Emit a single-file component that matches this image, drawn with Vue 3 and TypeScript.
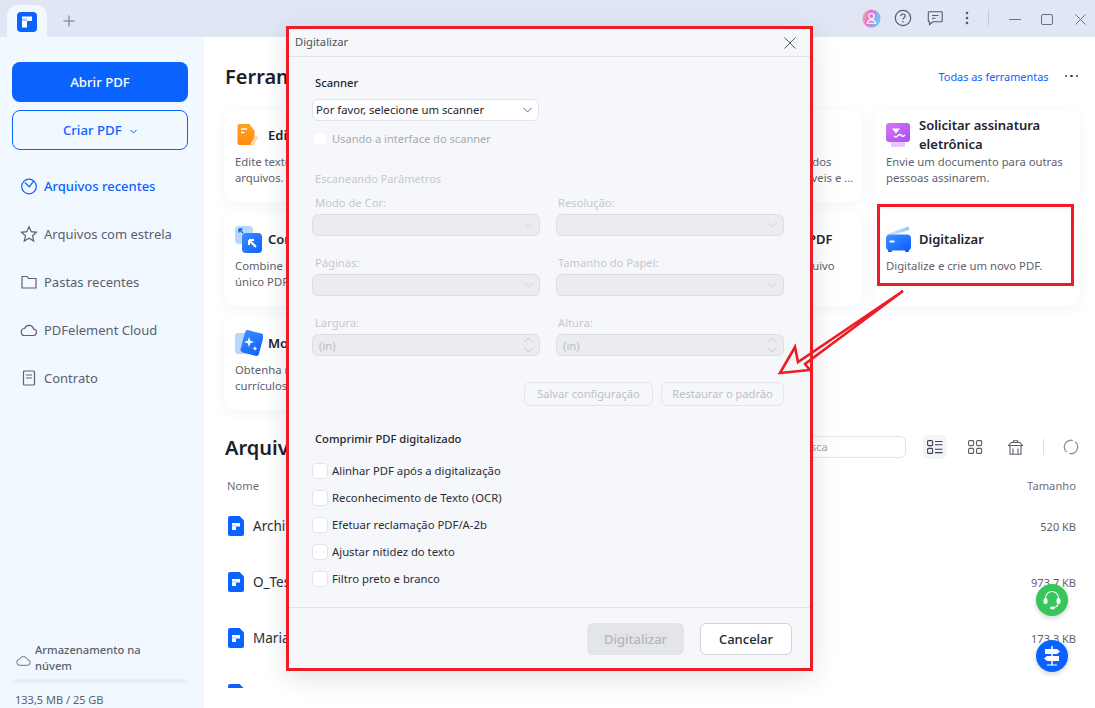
<script setup lang="ts">
interface Tool { title: string; lines: string[]; icon: string }
const tools: Tool[] = [
  { title: 'Editar PDF', lines: ['Edite textos e imagens nos', 'arquivos.'], icon: 'edit' },
  { title: 'Converter PDF', lines: ['Converta PDFs em outros', 'formatos de arquivo.'], icon: 'merge' },
  { title: 'Ler PDF', lines: ['Converta os PDFs digitalizados', 'em arquivos bem pesquisáveis e ...'], icon: 'merge' },
  { title: 'Solicitar assinatura eletrônica', lines: ['Envie um documento para outras', 'pessoas assinarem.'], icon: 'sign' },
  { title: 'Combinar PDF', lines: ['Combine vários arquivos em um', 'único PDF.'], icon: 'merge' },
  { title: 'Proteger PDF', lines: ['Adicione senha a um arquivo', 'PDF.'], icon: 'edit' },
  { title: 'Otimizar em um PDF', lines: ['Diminua o tamanho do arquivo'], icon: 'merge' },
  { title: 'Digitalizar', lines: ['Digitalize e crie um novo PDF.'], icon: 'scan' },
  { title: 'Modelos', lines: ['Obtenha modelos de', 'currículos e cartas.'], icon: 'tmpl' },
]
const nav = ['Arquivos recentes', 'Arquivos com estrela', 'Pastas recentes', 'PDFelement Cloud', 'Contrato']
const files = [
  { name: 'Architecture.pdf', size: '520 KB' },
  { name: 'O_Teste.pdf', size: '973,7 KB' },
  { name: 'Maria.pdf', size: '173,3 KB' },
  { name: 'Novo.pdf', size: '96 KB' },
]
const fields = [
  { label: 'Modo de Cor:', value: '', spin: false },
  { label: 'Resolução:', value: '', spin: false },
  { label: 'Páginas:', value: '', spin: false },
  { label: 'Tamanho do Papel:', value: '', spin: false },
  { label: 'Largura:', value: '(in)', spin: true },
  { label: 'Altura:', value: '(in)', spin: true },
]
const checks = ['Alinhar PDF após a digitalização', 'Reconhecimento de Texto (OCR)', 'Efetuar reclamação PDF/A-2b', 'Ajustar nitidez do texto', 'Filtro preto e branco']
</script>

<template>
  <div class="app">
    <header class="topbar">
      <div class="tab">
        <svg width="20" height="20" viewBox="0 0 20 20"><rect width="20" height="20" rx="4" fill="#0a62ff"/><path d="M5 4.500h10v4.500h-5v2H5z" fill="#fff"/><path d="M5 6.500h5v2.500H5z" fill="#a9cbff"/><rect x="5" y="11" width="5" height="4.500" fill="#fff"/></svg>
      </div>
      <svg class="plus" width="12" height="12" viewBox="0 0 12 12"><path d="M6 .5v11M.5 6h11" stroke="#6d7280" stroke-width="1" fill="none"/></svg>
      <div class="controls">
        <svg class="avatar" width="19" height="19" viewBox="0 0 20 20"><defs><linearGradient id="av" x1="0" y1="0" x2="1" y2="0.300"><stop offset="0" stop-color="#f4b38f"/><stop offset=".45" stop-color="#ee6fd0"/><stop offset="1" stop-color="#63c9f6"/></linearGradient></defs><circle cx="10" cy="10" r="9.500" fill="url(#av)"/><circle cx="10" cy="7.500" r="2.800" fill="none" stroke="#fff" stroke-width="1.200"/><path d="M5.500 15c.5-2.500 2-3.500 4.500-3.500s4 1 4.500 3.500z" fill="none" stroke="#fff" stroke-width="1.200"/></svg>
        <svg class="help" width="18" height="18" viewBox="0 0 18 18"><circle cx="9" cy="9" r="7.700" fill="none" stroke="#555b68" stroke-width="1.200"/><path d="M6.800 7.100c0-1.300 1-2.100 2.200-2.100s2.200.8 2.200 2c0 1.700-2.200 1.700-2.200 3.500" fill="none" stroke="#555b68" stroke-width="1.200"/><circle cx="9" cy="12.800" r=".8" fill="#555b68"/></svg>
        <svg class="chat" width="16" height="16" viewBox="0 0 16 16"><path d="M2 1.800h12.500a.7.7 0 0 1 .7.7v8.500a.7.7 0 0 1-.7.7H6l-3.500 2.800v-2.800H2a.7.7 0 0 1-.7-.7V2.500a.7.7 0 0 1 .7-.7z" fill="none" stroke="#555b68" stroke-width="1.100"/><path d="M5 5.500h6.500M5 8.300h3.500" stroke="#555b68" stroke-width="1.100" fill="none"/></svg>
        <svg class="kebab" width="4" height="14" viewBox="0 0 4 14"><circle cx="2" cy="2" r="1.300" fill="#555b68"/><circle cx="2" cy="7" r="1.300" fill="#555b68"/><circle cx="2" cy="12" r="1.300" fill="#555b68"/></svg>
        <span class="vsep"></span>
        <span class="min"></span>
        <span class="max"></span>
        <svg class="close" width="11" height="11" viewBox="0 0 11 11"><path d="M.5.500l10 10M10.500.500l-10 10" stroke="#6b707c" stroke-width="1" fill="none"/></svg>
      </div>
    </header>

    <div class="body">
      <aside class="sidebar">
        <button class="btn-open">Abrir PDF</button>
        <button class="btn-create">Criar PDF <svg class="chev" width="7" height="5" viewBox="0 0 7 5"><path d="M.5 1l3 3 3-3" fill="none" stroke="#0a62ff" stroke-width="1"/></svg></button>
        <nav class="nav">
          <div v-for="(n, i) in nav" :key="n" class="nav-item" :class="{ active: i === 0 }">
            <svg width="18" height="18" viewBox="0 0 18 18" fill="none" :stroke="i === 0 ? '#0a62ff' : '#5d626e'" stroke-width="1.200">
              <template v-if="i === 0"><circle cx="9" cy="9.500" r="7.300"/><path d="M4.800 5.500l4.500 4.300 4.400-6"/></template>
              <path v-else-if="i === 1" d="M9 1.800l2.200 4.900 5.300.6-4 3.500 1.200 5.200L9 13.300 4.300 16l1.200-5.200-4-3.500 5.300-.6z"/>
              <path v-else-if="i === 2" d="M2 3.500h5l1.500 2H16v9.500H2z"/>
              <path v-else-if="i === 3" d="M5 14.500a3.500 3.500 0 0 1-.4-7 4.600 4.600 0 0 1 8.900.6 3.200 3.200 0 0 1-.5 6.400z"/>
              <template v-else><rect x="3.500" y="2" width="11" height="14" rx="1"/><path d="M6 6h6M6 9h6"/></template>
            </svg>
            <span>{{ n }}</span>
          </div>
        </nav>
        <div class="storage">
          <div class="st-head">
            <svg width="15" height="11" viewBox="0 0 15 11"><path d="M4 10.300a3 3 0 0 1-.5-6 4.200 4.200 0 0 1 8 .4 2.800 2.800 0 0 1-.3 5.600z" fill="none" stroke="#6b707c" stroke-width="1"/></svg>
            <span>Armazenamento na núvem</span>
          </div>
          <div class="st-bar"></div>
          <div class="st-text">133,5 MB / 25 GB</div>
        </div>
      </aside>

      <main class="main">
        <div class="h-row">
          <h2>Ferramentas</h2>
          <a class="all">Todas as ferramentas</a>
          <span class="dots"><i></i><i></i><i></i></span>
        </div>
        <section class="tools">
          <article v-for="t in tools" :key="t.title" class="card">
            <div class="card-head">
              <svg v-if="t.icon === 'edit'" class="ic" width="26" height="26" viewBox="0 0 26 26">
                <defs><linearGradient id="og" x1="0" y1="0" x2="0" y2="1"><stop offset="0" stop-color="#ffa21f"/><stop offset="1" stop-color="#ff8a14"/></linearGradient></defs>
                <path d="M4.500 2h10l5 7v12a2 2 0 0 1-2 2H4.500a2 2 0 0 1-2-2V4a2 2 0 0 1 2-2z" fill="url(#og)"/>
                <path d="M6 7h6M6 10.500h3.500" stroke="#fff" stroke-width="1.500"/>
                <path d="M21 13.500l2.500 1.700-4.500 7.300-3.300 1.300.3-3.200z" fill="#ffd9ae"/>
              </svg>
              <svg v-else-if="t.icon === 'merge'" class="ic narrow" width="28" height="28" viewBox="0 0 28 28">
                <defs><linearGradient id="bg1" x1="0" y1="0" x2="1" y2="1"><stop offset="0" stop-color="#3d8dff"/><stop offset="1" stop-color="#0a62ff"/></linearGradient></defs>
                <rect x="0" y="1" width="18" height="18" rx="4" fill="#b7d8fb"/>
                <path d="M4 4l4 4M4 4v3.500M4 4h3.500" stroke="#0a62ff" stroke-width="1.500" fill="none"/>
                <rect x="7" y="8" width="20" height="20" rx="4" fill="url(#bg1)"/>
                <path d="M21 22l-6-6M14 15h5M14 15v5" stroke="#fff" stroke-width="2" fill="none"/>
              </svg>
              <svg v-else-if="t.icon === 'sign'" class="ic wide" width="24" height="25" viewBox="0 0 24 25">
                <defs><linearGradient id="pg" x1="0" y1="0" x2="1" y2="1"><stop offset="0" stop-color="#d479f7"/><stop offset="1" stop-color="#a94df0"/></linearGradient></defs>
                <rect x="5" y="19" width="14" height="5" rx="1" fill="#e7c6f9"/>
                <rect width="24" height="19" rx="3" fill="url(#pg)"/>
                <path d="M6 5.500h8l-4 5z" fill="#fff"/>
                <path d="M8 13c2 2 3 .5 4-.5s2.500-1.500 3.500 0 2 1 3.500-.5" stroke="#fff" stroke-width="1.400" fill="none"/>
              </svg>
              <svg v-else-if="t.icon === 'scan'" class="ic" width="25" height="26" viewBox="0 0 25 26">
                <defs><linearGradient id="sg" x1="0" y1="0" x2="1" y2="1"><stop offset="0" stop-color="#3f91ff"/><stop offset="1" stop-color="#0a5cff"/></linearGradient><linearGradient id="sl" x1="0" y1="1" x2="1" y2="0"><stop offset="0" stop-color="#e1eefd"/><stop offset="1" stop-color="#8fc0f8"/></linearGradient></defs>
                <path d="M1 8L22.500 .5l1.200 3.200L3 10.500z" fill="url(#sl)"/>
                <rect x="2" y="23" width="4" height="3" rx="1" fill="#0a5cff"/><rect x="19" y="23" width="4" height="3" rx="1" fill="#0a5cff"/>
                <path d="M4 8.500h17a4 4 0 0 1 4 4v8a4 4 0 0 1-4 4H4a4 4 0 0 1-4-4v-8a4 4 0 0 1 4-4z" fill="url(#sg)"/>
                <rect x="3.500" y="14.500" width="5" height="2" fill="#fff"/>
              </svg>
              <svg v-else class="ic narrow" width="28" height="28" viewBox="0 0 28 28">
                <defs><linearGradient id="tg" x1="0" y1="0" x2="1" y2="1"><stop offset="0" stop-color="#3d8dff"/><stop offset="1" stop-color="#0a62ff"/></linearGradient></defs>
                <rect x="0" y="4" width="18" height="21" rx="3" fill="#b7d8fb"/>
                <rect x="7.500" y="2.500" width="19" height="23" rx="3" transform="rotate(15 17 14)" fill="url(#tg)"/>
                <path d="M14 8l1.300 3.700L19 13l-3.700 1.300L14 18l-1.300-3.700L9 13l3.700-1.300z" fill="#fff"/>
                <path d="M20 17l.7 1.800 1.800.7-1.800.7-.7 1.800-.7-1.800-1.800-.7 1.800-.7z" fill="#fff"/>
              </svg>
              <h3>{{ t.title }}</h3>
            </div>
            <p v-for="(l, li) in t.lines" :key="li">{{ l }}</p>
          </article>
        </section>

        <div class="h-row second">
          <h2>Arquivos recentes</h2>
          <div class="search">Busca</div>
          <span class="view on"><svg width="16" height="14" viewBox="0 0 16 14" fill="none" stroke="#3d4250" stroke-width="1.100"><rect x=".6" y=".6" width="5" height="5" rx="1"/><rect x=".6" y="8.400" width="5" height="5" rx="1"/><path d="M8 1.500h7.500M8 4.800h7.500M8 9.300h7.500M8 12.600h7.500"/></svg></span>
          <span class="view"><svg width="15" height="14" viewBox="0 0 15 14" fill="none" stroke="#5d626e" stroke-width="1.100"><rect x=".6" y=".6" width="5" height="5" rx="1"/><rect x="8.600" y=".6" width="5" height="5" rx="1"/><rect x=".6" y="8.400" width="5" height="5" rx="1"/><rect x="8.600" y="8.400" width="5" height="5" rx="1"/></svg></span>
          <span class="view"><svg width="15" height="15" viewBox="0 0 15 15" fill="none" stroke="#5d626e" stroke-width="1.100"><path d="M2 5.500v8.800h11V5.500M.5 5.500h14L12 2.500H3zM5.500 2.500V.8h4v1.700M5 8.500v5.500M10 8.500v5.500"/></svg></span>
          <span class="vsep2"></span>
          <span class="view last"><svg width="16" height="16" viewBox="0 0 16 16" fill="none" stroke="#8b8f9a" stroke-width="1.300"><circle cx="8" cy="8" r="6.700" stroke-dasharray="18 3" transform="rotate(-50 8 8)"/></svg></span>
        </div>
        <div class="t-head"><span>Nome</span><span>Tamanho</span></div>
        <div class="list">
          <div v-for="f in files" :key="f.name" class="row">
            <svg width="16" height="20" viewBox="0 0 16 20"><path d="M2 0h9.500L16 4.500V18a2 2 0 0 1-2 2H2a2 2 0 0 1-2-2V2a2 2 0 0 1 2-2z" fill="#0a62ff"/><path d="M4 7h8v3.500H8V14H4z" fill="#fff"/><path d="M8 10.500H4V8.800h4z" fill="#bcd5ff"/></svg>
            <span class="fname">{{ f.name }}</span>
            <span class="fsize">{{ f.size }}</span>
          </div>
        </div>
      </main>
    </div>

    <button class="fab green"><svg width="20" height="21" viewBox="0 0 20 21" fill="none"><path d="M3.500 11V8a6.500 6.500 0 0 1 13 0v3" stroke="#fff" stroke-width="1.100"/><rect x="1.500" y="8" width="4" height="6" rx="2" fill="#fff"/><rect x="14.500" y="8" width="4" height="6" rx="2" fill="#fff"/><path d="M16 14c0 2-2 3-4 3.500" stroke="#fff" stroke-width="1.100"/><ellipse cx="10.500" cy="18" rx="2.500" ry="1.400" fill="#fff"/></svg></button>
    <button class="fab blue"><svg width="18" height="20" viewBox="0 0 18 20" fill="#fff"><rect x="8.300" y="0" width="1.500" height="19"/><rect x="4" y="18.500" width="10" height="1"/><path d="M2 3h12l3 2.500L14 8H2z"/><path d="M16 10H4l-3 2.500L4 15h12z"/></svg></button>

    <div class="target"></div>

    <section class="dialog">
      <div class="d-title">
        <span>Digitalizar</span>
        <svg width="12" height="12" viewBox="0 0 12 12"><path d="M.5.500l11 11M11.500.500l-11 11" stroke="#555b68" stroke-width="1" fill="none"/></svg>
      </div>
      <div class="d-body">
        <div class="d-h first">Scanner</div>
        <div class="select">
          <span>Por favor, selecione um scanner</span>
          <svg width="9" height="6" viewBox="0 0 9 6"><path d="M.5 1l4 4 4-4" fill="none" stroke="#6b707c" stroke-width="1"/></svg>
        </div>
        <div class="chk disabled top"><i></i><span>Usando a interface do scanner</span></div>
        <div class="d-h muted sect">Escaneando Parâmetros</div>
        <div class="grid">
          <div v-for="f in fields" :key="f.label" class="field">
            <label>{{ f.label }}</label>
            <div class="box">
              <span>{{ f.value }}</span>
              <svg v-if="!f.spin" width="9" height="6" viewBox="0 0 9 6"><path d="M.5 1l4 4 4-4" fill="none" stroke="#d0d2d8" stroke-width="1"/></svg>
              <svg v-else width="9" height="16" viewBox="0 0 9 16" fill="none" stroke="#c4c6cc" stroke-width="1"><path d="M.5 5l4-4 4 4M.5 11l4 4 4-4"/></svg>
            </div>
          </div>
        </div>
        <div class="cfg">
          <button class="g1">Salvar configuração</button>
          <button class="g2">Restaurar o padrão</button>
        </div>
        <div class="d-h comp">Comprimir PDF digitalizado</div>
        <div class="checks">
          <div v-for="c in checks" :key="c" class="chk"><i></i><span>{{ c }}</span></div>
        </div>
      </div>
      <footer class="d-foot">
        <button class="go">Digitalizar</button>
        <button class="cancel">Cancelar</button>
      </footer>
    </section>

    <svg class="arrow" width="140" height="100" viewBox="0 0 140 100">
      <path d="M128 7L23 78 20 63 5 89 35 86 30 80Z" fill="none" stroke="#ee1c25" stroke-width="2.600" stroke-linejoin="miter"/>
    </svg>
  </div>
</template>

<style>
html, body { margin: 0; background: #fff; }
</style>

<style scoped>
.app { position: relative; width: 1095px; height: 708px; overflow: hidden; display: flex; flex-direction: column; font-family: "Noto Sans", "Open Sans", sans-serif; font-size: 11.3px; color: #222; background: #fff; }
button { font-family: inherit; cursor: pointer; }
h2, h3, p { margin: 0; }

.topbar { height: 37px; flex: none; background: #e1e6f4; display: flex; align-items: flex-start; position: relative; }
.tab { width: 40px; height: 32px; margin: 5px 0 0 7px; background: #f3f8ff; border-radius: 10px 10px 0 0; display: flex; justify-content: center; padding-top: 7px; box-sizing: border-box; }
.plus { margin: 15px 0 0 16px; }
.controls { margin-left: auto; height: 36px; display: flex; align-items: center; }
.avatar { margin-right: 13px; }
.help { margin-right: 15px; }
.chat { margin-right: 22px; }
.kebab { margin-right: 19px; }
.vsep { width: 1px; height: 16px; background: #c6cad6; margin-right: 20px; }
.min { width: 12px; height: 1px; background: #6b707c; margin-right: 20px; margin-top: 2px; }
.max { width: 10px; height: 9px; border: 1px solid #6b707c; border-radius: 2px; margin-right: 22px; margin-top: 2px; }
.close { margin-right: 9px; margin-top: 2px; }

.body { flex: 1; display: flex; min-height: 0; }
.sidebar { width: 204px; flex: none; box-sizing: border-box; background: #f2f8ff; padding: 25px 16px 0 12px; display: flex; flex-direction: column; }
.btn-open { height: 40px; border: 0; border-radius: 8px; background: #0a62ff; color: #fff; font-size: 13.2px; font-weight: 500; }
.btn-create { height: 40px; margin-top: 8px; border: 1px solid #0a62ff; border-radius: 8px; background: transparent; color: #0a62ff; font-size: 13.2px; font-weight: 500; }
.chev { margin-left: 5px; vertical-align: 1px; }
.nav { margin-top: 12px; }
.nav-item { height: 48px; display: flex; align-items: center; gap: 6px; padding-left: 8px; font-size: 13px; color: #5b606c; }
.nav-item.active { color: #0a62ff; font-weight: 500; }
.storage { margin-top: auto; }
.st-head { display: flex; align-items: center; margin-left: 4px; font-size: 11.2px; line-height: 16px; color: #5b606c; font-weight: 500; }
.st-head svg { flex: none; margin: 5px 4px 0 0; }
.st-head span { width: 130px; }
.st-bar { height: 4px; margin: 5px 1px 0 1px; border-radius: 2px; background: #ebeef4; }
.st-text { margin: 9px 0 0 3px; line-height: 16px; font-size: 11px; color: #5b606c; }

.main { flex: 1; min-width: 0; padding: 0 15px 0 20px; }
.h-row { display: flex; align-items: center; height: 28px; margin-top: 25px; padding-left: 1px; }
.h-row h2 { font-size: 20px; font-weight: 600; color: #1b1f2a; white-space: nowrap; }
.all { margin-left: auto; color: #0a62ff; font-size: 10.9px; margin-right: 16px; }
.dots { display: flex; gap: 3px; margin-right: 2px; }
.dots i { width: 2.500px; height: 2.500px; background: #3a3f4c; border-radius: 50%; }
.tools { display: grid; grid-template-columns: repeat(4, 205px); grid-auto-rows: 92px; gap: 12px; margin-top: 20px; }
.card { background: #fff; border-radius: 10px; box-shadow: 0 2px 12px rgba(30, 60, 130, 0.06); padding: 10px 11px 0; overflow: hidden; }
.card-head { height: 30px; display: flex; align-items: center; margin-bottom: 4px; }
.ic { flex: none; margin-right: 7px; }
.ic.narrow { margin-right: 5px; }
.ic.wide { margin-right: 9px; }
.card:nth-child(4n) .ic:not(.wide) { margin-right: 8px; }
.card h3 { font-size: 13px; font-weight: 600; line-height: 19px; color: #1f2330; }
.card p { font-size: 11.3px; line-height: 16px; color: #5e6270; white-space: nowrap; }
.h-row.second { height: 24px; margin-top: 25px; }
.search { margin-left: auto; width: 140px; height: 22px; flex: none; box-sizing: border-box; border: 1px solid #e3e5ea; border-radius: 6px; line-height: 20px; padding-left: 30px; font-size: 11px; color: #a5a8b1; margin-right: 17px; }
.view { width: 24px; height: 24px; flex: none; border-radius: 6px; display: flex; align-items: center; justify-content: center; margin-right: 16px; }
.view.on { background: #f2f4f8; }
.view.last { margin-right: -3px; }
.vsep2 { width: 1px; height: 16px; flex: none; background: #dcdee4; margin-right: 15px; }
.t-head { display: flex; justify-content: space-between; margin-top: 18px; height: 18px; line-height: 18px; padding: 0 4px 0 3px; color: #6b6f7c; font-size: 11.2px; }
.list { height: 190px; overflow: hidden; margin-top: 3px; }
.row { height: 56px; display: flex; align-items: center; padding: 0 4px 0 4px; }
.fname { margin-left: 9px; font-size: 13.5px; color: #2a2e3a; }
.fsize { margin-left: auto; color: #5e6270; font-size: 11px; }

.fab { position: absolute; left: 1036px; width: 32px; height: 32px; border: 0; border-radius: 50%; display: flex; align-items: center; justify-content: center; padding: 0; box-shadow: 0 2px 5px rgba(0, 0, 0, 0.18); }
.fab.green { top: 584px; background: #35c759; }
.fab.blue { top: 640px; background: #0a62ff; }

.target { position: absolute; left: 877px; top: 204px; width: 197px; height: 82px; box-sizing: border-box; border: 3px solid #ee1c25; }
.arrow { position: absolute; left: 775px; top: 284px; }

.dialog { position: absolute; left: 286px; top: 26px; width: 527px; height: 645px; box-sizing: border-box; border: 3px solid #ee1c25; background: #f5f7fb; display: flex; flex-direction: column; box-shadow: 0 6px 24px rgba(30, 40, 70, 0.14); }
.d-title { height: 28px; flex: none; box-sizing: border-box; border-bottom: 1px solid #e1e3e9; display: flex; align-items: center; justify-content: space-between; padding: 0 14px 0 6px; font-size: 11.2px; color: #4d515d; }
.d-title span { margin-top: -2px; }
.d-body { flex: 1; padding: 0 26px 0 23px; }
.d-h { height: 18px; line-height: 18px; margin-left: 3px; font-size: 11.2px; font-weight: 500; color: #23262f; }
.d-h.first { margin-top: 17px; }
.d-h.muted { color: #c6c8ce; font-weight: 400; font-size: 11.1px; }
.d-h.sect { margin-top: 23px; }
.d-h.comp { margin-top: 24px; }
.select { width: 227px; height: 22px; margin-top: 7px; box-sizing: border-box; background: #fff; border: 1px solid #e2e4ea; border-radius: 6px; display: flex; align-items: center; justify-content: space-between; padding: 0 6px 0 3px; color: #23262f; font-size: 11.3px; }
.select span { margin-top: -2px; }
.chk { display: flex; align-items: center; height: 16px; font-size: 11.3px; color: #2b2e38; }
.chk span { margin-top: -1px; }
.chk i { width: 16px; height: 16px; box-sizing: border-box; border: 1px solid #e2e4ea; border-radius: 4px; background: #fff; margin-right: 4px; flex: none; }
.chk.top { margin-top: 10px; }
.chk.disabled { color: #a7aab2; font-size: 11.1px; }
.chk.disabled i { border-color: #f3f4f7; margin-left: 1px; width: 14px; height: 14px; margin-right: 5px; }
.grid { display: grid; grid-template-columns: 228px 228px; column-gap: 16px; row-gap: 18px; margin-top: 6px; }
.field label { display: block; height: 18px; line-height: 18px; margin-left: 3px; color: #c6c8ce; font-size: 11.2px; }
.field:nth-child(even) label { margin-left: 2px; }
.box { height: 22px; margin-top: 2px; box-sizing: border-box; background: #ebecf0; border: 1px solid #dcdee3; border-radius: 6px; display: flex; align-items: center; justify-content: space-between; padding: 0 6px; color: #b9bbc2; font-size: 11.3px; }
.cfg { display: flex; justify-content: flex-end; gap: 8px; margin-top: 26px; }
.cfg button { height: 24px; box-sizing: border-box; background: transparent; border: 1px solid #e3e5ea; border-radius: 6px; color: #bdbfc6; font-size: 11.1px; padding: 0 0 2px; }
.g1 { width: 129px; }
.g2 { width: 123px; }
.checks { margin-top: 15px; display: flex; flex-direction: column; gap: 11px; }
.d-foot { height: 61px; flex: none; box-sizing: border-box; border-top: 1px solid #e1e3e9; display: flex; justify-content: flex-end; gap: 16px; padding: 15px 18px 0 0; }
.d-foot button { height: 32px; border-radius: 6px; font-size: 13px; font-weight: 500; padding: 0; box-sizing: border-box; }
.go { width: 97px; border: 0; background: #e3e5e9; color: #b3b5bc; }
.cancel { width: 92px; background: #fff; border: 1px solid #d2d4da; color: #23262f; }
</style>
